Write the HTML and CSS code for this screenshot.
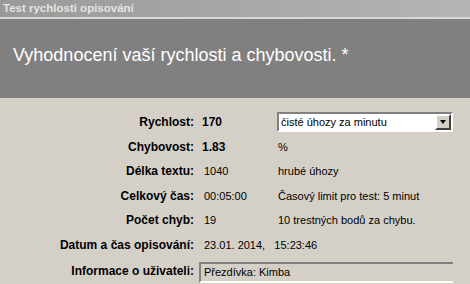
FILE: index.html
```html
<!DOCTYPE html>
<html>
<head>
    <title>Test rychlosti opisování</title>
    <link rel="stylesheet" href="styles.css">
</head>
<body>
    <div class="titlebar">Test rychlosti opisování</div>
    <div class="header">
        <h1>Vyhodnocení vaší rychlosti a chybovosti. *</h1>
    </div>
    <table class="results">
        <tr>
            <th>Rychlost:</th>
            <td class="val strong">170</td>
            <td class="note">
                <div class="select">
                    <span>čisté úhozy za minutu</span>
                    <span class="arrow"></span>
                </div>
            </td>
        </tr>
        <tr>
            <th>Chybovost:</th>
            <td class="val strong">1.83</td>
            <td class="note">%</td>
        </tr>
        <tr>
            <th>Délka textu:</th>
            <td class="val">1040</td>
            <td class="note">hrubé úhozy</td>
        </tr>
        <tr>
            <th>Celkový čas:</th>
            <td class="val">00:05:00</td>
            <td class="note">Časový limit pro test: 5 minut</td>
        </tr>
        <tr>
            <th>Počet chyb:</th>
            <td class="val">19</td>
            <td class="note">10 trestných bodů za chybu.</td>
        </tr>
        <tr>
            <th>Datum a čas opisování:</th>
            <td class="val" colspan="2">23.01. 2014, &nbsp; 15:23:46</td>
        </tr>
        <tr class="last">
            <th>Informace o uživateli:</th>
            <td colspan="2"><div class="info">Přezdívka: Kimba</div></td>
        </tr>
    </table>
</body>
</html>
```
FILE: styles.css
```css
body {
    margin: 0;
    width: 470px;
    height: 284px;
    overflow: hidden;
    background-color: #d4d0c8;
    font-family: "Liberation Sans", Arial, sans-serif;
    font-size: 11px;
    color: #000;
}

.titlebar {
    height: 17px;
    line-height: 17px;
    padding-left: 3px;
    background: linear-gradient(to right, #9a9a9a, #b4b4b4);
    border-bottom: 2px solid #d8d8d8;
    color: #e4e4e4;
    font-weight: bold;
    font-size: 11.5px;
}

.header {
    height: 79px;
    background-color: #808080;
    display: flex;
    align-items: center;
    padding-left: 13px;
}

.header h1 {
    margin: 0 0 6px 0;
    font-size: 18px;
    font-weight: normal;
    color: #fff;
}

.results {
    border-collapse: collapse;
    margin-top: 12px;
}

.results th {
    width: 196px;
    padding: 0 2px 0 0;
    height: 24.5px;
    text-align: right;
    font-weight: bold;
    font-size: 12px;
    box-sizing: border-box;
    white-space: nowrap;
}

.results td {
    padding: 0;
    white-space: nowrap;
}

.results .val {
    width: 74px;
    padding-left: 8px;
}

.results .strong {
    font-weight: bold;
    font-size: 12px;
    padding-left: 6px;
}

.results .last th {
    height: 24px;
    padding-top: 1px;
}

.results .last td {
    vertical-align: top;
    padding-top: 5px;
}

.select {
    box-sizing: border-box;
    display: flex;
    align-items: center;
    justify-content: space-between;
    width: 176px;
    height: 20px;
    margin-left: -1px;
    background: #fff;
    border: 2px solid;
    border-color: #808080 #fff #fff #808080;
    padding-left: 2px;
}

.arrow {
    width: 16px;
    height: 16px;
    background: #d4d0c8;
    box-sizing: border-box;
    border: 2px solid;
    border-color: #fff #404040 #404040 #fff;
    position: relative;
}

.arrow::after {
    content: "";
    position: absolute;
    left: 3px;
    top: 4px;
    border-left: 3.5px solid transparent;
    border-right: 3.5px solid transparent;
    border-top: 4px solid #000;
}

.info {
    margin-left: 3px;
    height: 17px;
    line-height: 17px;
    padding-left: 3px;
    border: 2px solid;
    border-color: #808080 #fff #fff #808080;
    border-right: none;
}
```
